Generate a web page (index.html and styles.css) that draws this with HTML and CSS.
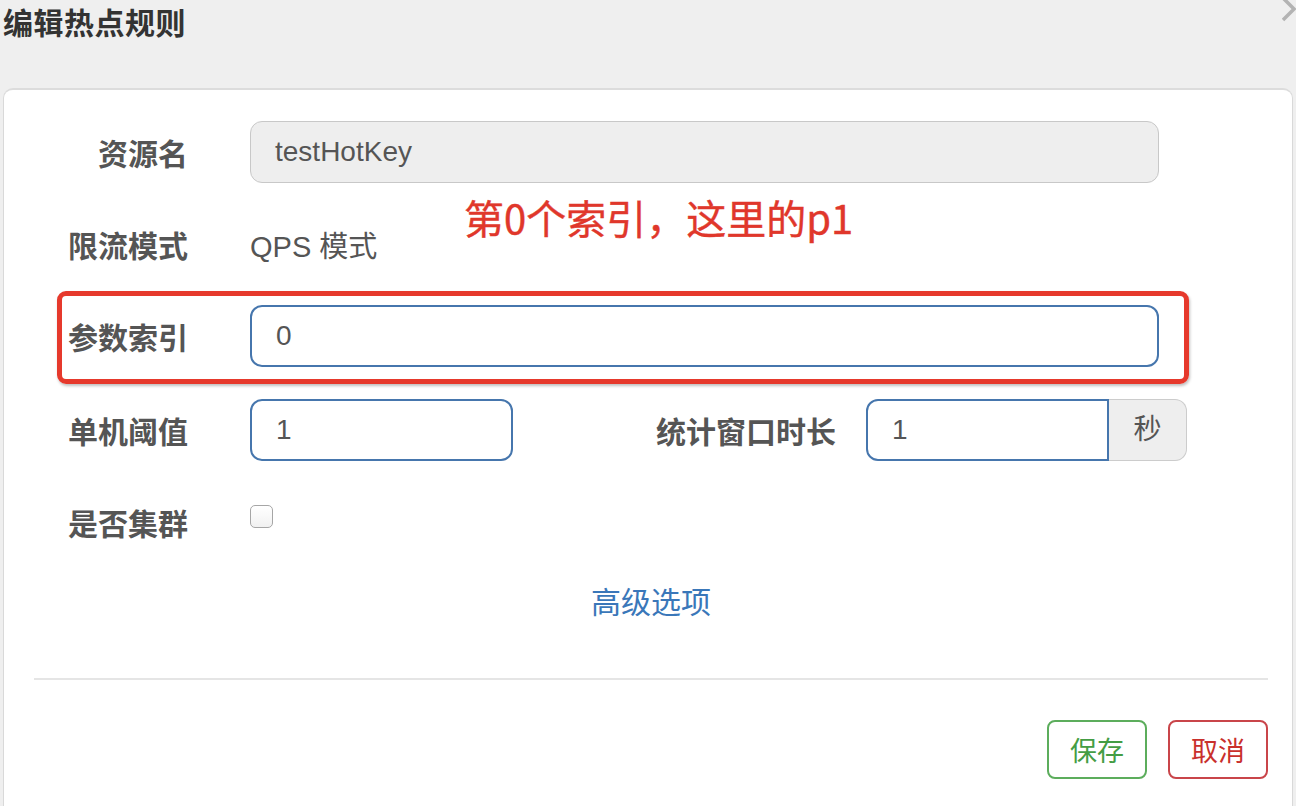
FILE: index.html
```html
<!DOCTYPE html>
<html lang="zh">
<head>
<meta charset="utf-8">
<title>编辑热点规则</title>
<link rel="stylesheet" href="styles.css">
</head>
<body>
<div class="modal">
  <div class="modal-header">
    <h4 class="title">编辑热点规则</h4>
    <svg class="close" width="14" height="22" viewBox="0 0 14 22"><polyline points="1,-2 12,9 1,20" fill="none" stroke="#b3b3b3" stroke-width="3.5"/></svg>
  </div>
  <div class="panel">
    <form class="form">
      <div class="row">
        <label class="label">资源名</label>
        <div class="input input-wide disabled">testHotKey</div>
      </div>
      <div class="row">
        <label class="label">限流模式</label>
        <div class="static">QPS 模式</div>
      </div>
      <div class="row row-tight">
        <label class="label">参数索引</label>
        <div class="input input-wide focus">0</div>
      </div>
      <div class="row">
        <label class="label">单机阈值</label>
        <div class="input input-small focus">1</div>
        <label class="label label-mid">统计窗口时长</label>
        <div class="group">
          <div class="input group-input focus">1</div>
          <div class="addon">秒</div>
        </div>
      </div>
      <div class="row row-check">
        <label class="label">是否集群</label>
        <div class="check-wrap"><span class="checkbox"></span></div>
      </div>
      <div class="advanced"><a class="link">高级选项</a></div>
    </form>
    <div class="divider"></div>
    <div class="footer">
      <button class="btn btn-save" type="button">保存</button>
      <button class="btn btn-cancel" type="button">取消</button>
    </div>
    <div class="note-box"></div>
    <div class="note-text">第0个索引，这里的p1</div>
  </div>
</div>
</body>
</html>
```

FILE: styles.css
```css
* { box-sizing: border-box; }
html, body {
  margin: 0;
  padding: 0;
  width: 1296px;
  height: 806px;
  overflow: hidden;
  background: #efefef;
  font-family: "Liberation Sans", Arial, "Noto Sans CJK SC", sans-serif;
  color: #555;
}
.modal { position: relative; }
.modal-header {
  height: 88px;
  position: relative;
}
.title {
  margin: 0;
  padding: 7px 0 0 3px;
  font-size: 30px;
  line-height: 34px;
  font-weight: bold;
  color: #333;
  letter-spacing: 0.5px;
}
.close {
  position: absolute;
  right: 0;
  top: 0;
}
.panel {
  position: relative;
  margin: 0 3px;
  height: 730px;
  background: #fff;
  border: 1px solid #d9d9d9;
  border-top: 2px solid #dcdcdc;
  border-radius: 10px 10px 0 0;
  padding-top: 31px;
}
.form { display: flex; flex-direction: column; }
.row {
  display: flex;
  align-items: flex-start;
  margin-bottom: 30px;
  min-height: 62px;
}
.row-tight { margin-bottom: 32px; }
.label {
  width: 184px;
  flex: none;
  text-align: right;
  padding-top: 14px;
  font-size: 30px;
  line-height: 40px;
  font-weight: bold;
  color: #555;
  margin-right: 62px;
}
.label-mid {
  width: 323px;
  margin-right: 30px;
}
.static {
  padding-top: 14px;
  font-size: 29px;
  line-height: 40px;
  color: #555;
}
.input {
  height: 62px;
  border: 1.5px solid #ccc;
  border-radius: 12px;
  padding: 0 24px;
  font-size: 28px;
  line-height: 59px;
  color: #555;
  background: #fff;
}
.input-wide { width: 909px; }
.input-small { width: 263px; }
.disabled { background: #eee; border-color: #c8c8c8; }
.focus { border: 2px solid #4676ad; line-height: 58px; }
.group { display: flex; width: 321px; }
.group-input {
  width: 243px;
  border-radius: 12px 0 0 12px;
}
.addon {
  width: 78px;
  height: 62px;
  background: #eee;
  border: 1.5px solid #ccc;
  border-left: none;
  border-radius: 0 12px 12px 0;
  text-align: center;
  font-size: 28px;
  line-height: 59px;
  color: #555;
}
.row-check { min-height: 62px; }
.check-wrap { padding-top: 14px; }
.checkbox {
  display: block;
  width: 23px;
  height: 23px;
  border: 1.5px solid #a6a6a6;
  border-radius: 5px;
  background: linear-gradient(#fff, #f1f1f1);
}
.advanced {
  text-align: center;
  height: 40px;
  padding-left: 6px;
}
.link {
  font-size: 30px;
  line-height: 40px;
  color: #3a77b9;
}
.divider {
  margin: 55px 24px 0 30px;
  height: 2px;
  background: #e5e5e5;
}
.footer {
  display: flex;
  justify-content: flex-end;
  gap: 21px;
  margin: 40px 24px 0 0;
}
.btn {
  width: 100px;
  height: 59px;
  background: #fff;
  border: 2px solid;
  border-radius: 8px;
  font-family: inherit;
  font-size: 27px;
  padding: 0;
}
.btn-save { border-color: #5cad5c; color: #449d44; }
.btn-cancel { border-color: #c9454a; color: #c9302c; }
.note-box {
  position: absolute;
  left: 53px;
  top: 201px;
  width: 1132px;
  height: 93px;
  border: 5px solid #e6392c;
  border-radius: 9px;
  box-shadow: 1px 2px 3px rgba(0,0,0,0.25);
}
.note-text {
  position: absolute;
  left: 460px;
  top: 104px;
  font-size: 40px;
  line-height: 46px;
  font-weight: normal;
  color: #e0372b;
  font-family: "Noto Sans CJK SC", "Liberation Sans", sans-serif;
  -webkit-text-stroke: 0.4px #e0372b;
}
```
